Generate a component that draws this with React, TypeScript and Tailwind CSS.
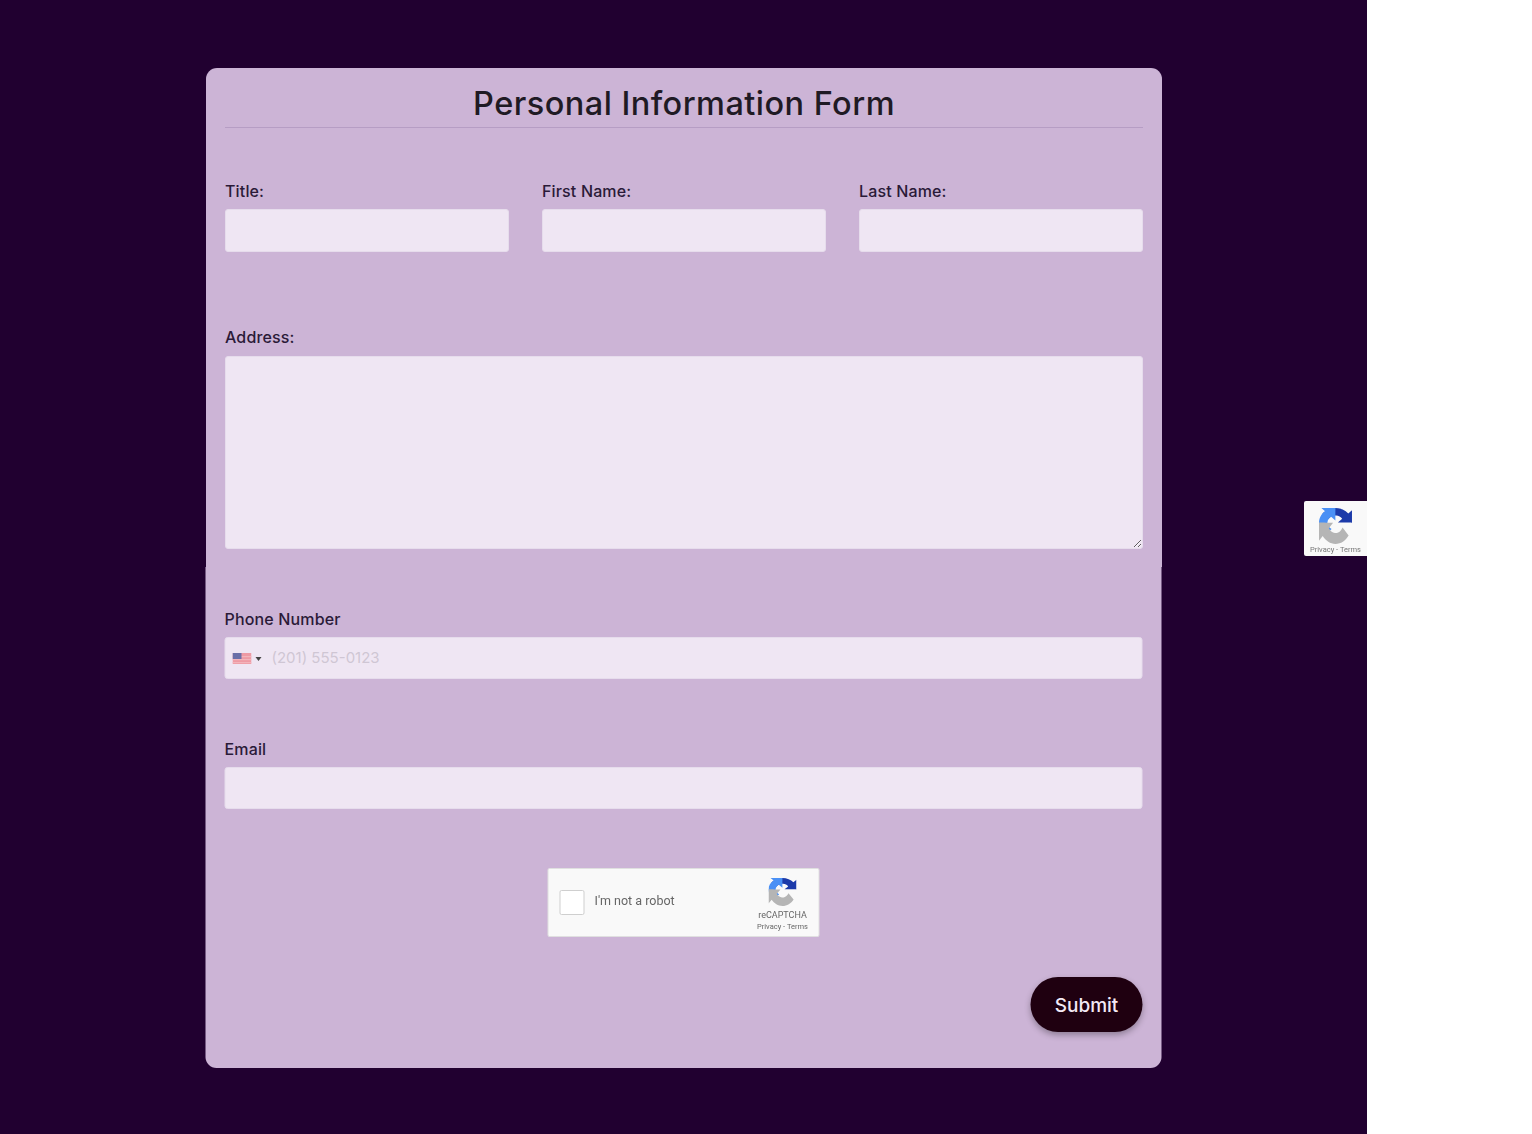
import React from 'react';

const font = "[font-family:Inter,'Noto_Sans',sans-serif]";
const inputBox = 'w-full rounded-[3px] border border-[#e6dcec] bg-[#efe6f3] outline-none';
const labelText = 'block text-[16px] leading-[18px] font-medium tracking-[0.15px] text-[#2a1a38]';

const RecaptchaLogo: React.FC<{ className: string }> = ({ className }) => (
  <svg viewBox="0 0 64 64" preserveAspectRatio="none" className={className}>
    <g transform="matrix(1 0 0 .8125 0 0)">
      <path
        fill="#1c3aa9"
        d="M64 31.955l-.033-1.37V4.687l-7.16 7.16C50.948 4.674 42.033.093 32.05.093c-10.4 0-19.622 4.96-25.458 12.64l11.736 11.86c1.15-2.127 2.784-3.953 4.77-5.33 2.05-1.6 4.952-2.91 8.952-2.91.482 0 .857.056 1.132.162 4.962.39 9.263 3.13 11.8 7.093l-8.3 8.3c10.52-.04 22.4-.066 27.32.098"
      />
      <path
        fill="#4a90f5"
        d="M31.862.094l-1.37.033H4.594l7.16 7.16C4.58 13.147 0 22.06 0 32.046c0 10.4 4.96 19.622 12.64 25.458l11.86-11.736c-2.127-1.15-3.953-2.784-5.33-4.77-1.6-2.05-2.91-4.952-2.91-8.952 0-.482.056-.857.162-1.132.39-4.962 3.13-9.263 7.093-11.8l8.3 8.3c-.04-10.52-.066-22.4.098-27.32"
      />
    </g>
    <g transform="matrix(1 0 0 1.1875 0 -12)">
      <path
        fill="#b5b5b5"
        d="M.001 32.045l.033 1.37v25.898l7.16-7.16c5.86 7.173 14.774 11.754 24.76 11.754 10.4 0 19.622-4.96 25.458-12.64L45.676 39.41c-1.15 2.127-2.784 3.953-4.77 5.33-2.05 1.6-4.952 2.91-8.952 2.91-.482 0-.857-.056-1.132-.162-4.962-.39-9.263-3.13-11.8-7.093l8.3-8.3c-10.52.04-22.4.066-27.32-.098"
      />
    </g>
  </svg>
);

const Flag = () => (
  <svg viewBox="0 0 19 11" className="h-[11px] w-[19px]">
    <rect width="19" height="11" fill="#ee9aa4" />
    <rect y="3" width="19" height="1.2" fill="#f3b4bb" />
    <rect y="6" width="19" height="1.2" fill="#f3b4bb" />
    <rect y="9" width="19" height="1.2" fill="#f3b4bb" />
    <rect width="9" height="6" fill="#6a6fa8" />
  </svg>
);

const Field: React.FC<{ label: string }> = ({ label }) => (
  <div className="flex-1">
    <label className={`mb-[9px] ${labelText}`}>{label}</label>
    <input className={`h-[43px] ${inputBox}`} />
  </div>
);

export default function App() {
  return (
    <div className={`relative h-[1134px] w-[1367px] bg-[#210030] pt-[68px] ${font}`}>
      {/* top half of the card */}
      <div className="ml-[206px] h-[499px] w-[956px] rounded-t-[11px] bg-[#ccb4d6] px-[19px]">
        <h1 className="h-[60px] border-b border-[#b69dc4] pt-[13.5px] text-center text-[32.5px] leading-[44px] font-medium tracking-[0.45px] text-[#1f1a24]">
          Personal Information Form
        </h1>
        <div className="mt-[54px] flex gap-[33px]">
          <Field label="Title:" />
          <Field label="First Name:" />
          <Field label="Last Name:" />
        </div>
        <div className="mt-[76px]">
          <label className={`mb-[10px] ${labelText}`}>Address:</label>
          <textarea className="block h-[193px] w-full resize-y rounded-[3px] border border-[#e6dcec] bg-[#efe6f3] outline-none" />
        </div>
      </div>

      {/* bottom half, sits half a pixel to the left */}
      <div className="ml-[206px] h-[501px] w-[956px] -translate-x-[0.5px] rounded-b-[11px] bg-[#ccb4d6] px-[19px] pt-[43px]">
        <label className={`mb-[9px] ${labelText}`}>Phone Number</label>
        <div className={`h-[42px] ${inputBox} flex items-center pl-[7px]`}>
          <Flag />
          <span className="mt-[1px] ml-[4px] h-0 w-0 border-x-[3.5px] border-t-[4px] border-x-transparent border-t-[#444]" />
          <input
            placeholder="(201) 555-0123"
            className="mt-[1px] ml-[10px] flex-1 bg-transparent text-[15px] outline-none placeholder:text-[#cfc6d4]"
          />
        </div>

        <label className={`mt-[61px] mb-[9px] ${labelText}`}>Email</label>
        <input className={`h-[42px] ${inputBox}`} />

        <div className="mt-[59px] flex justify-center">
          <div className="flex h-[69px] w-[272px] items-center rounded-[2px] border border-[#e0e0e0] bg-[#f9f9f9] pl-[11px] font-['Roboto',sans-serif] blur-[0.3px]">
            <span className="h-[25px] w-[25px] rounded-[2px] border-[1.5px] border-[#cfcfcf] bg-white" />
            <span className="-mt-[3px] ml-[10px] text-[12.5px] text-[#666]">I'm not a robot</span>
            <div className="ml-auto flex w-[72px] flex-col items-center pt-[5px]">
              <RecaptchaLogo className="h-[28px] w-[28px]" />
              <span className="mt-[3.5px] text-[9px] leading-[11px] text-[#666]">reCAPTCHA</span>
              <span className="text-[7.5px] leading-[11px] text-[#666]">Privacy - Terms</span>
            </div>
          </div>
        </div>

        <div className="mt-[40px] flex justify-end">
          <button className="h-[55px] w-[112px] rounded-[28px] bg-[#1f0010] pt-[3px] text-[19px] font-medium text-[#f3e9f5] shadow-[0_3px_6px_rgba(0,0,0,0.3)]">
            Submit
          </button>
        </div>
      </div>

      {/* floating recaptcha badge */}
      <div className="absolute top-[501px] left-[1304px] flex h-[55px] w-[63px] flex-col items-center rounded-l-[2px] bg-[#f9f9f9] pt-[7px] font-['Roboto',sans-serif] blur-[0.3px]">
        <RecaptchaLogo className="h-[36px] w-[33px]" />
        <span className="mt-[1px] text-[7.5px] leading-[10px] whitespace-nowrap text-[#777]">Privacy - Terms</span>
      </div>
    </div>
  );
}
